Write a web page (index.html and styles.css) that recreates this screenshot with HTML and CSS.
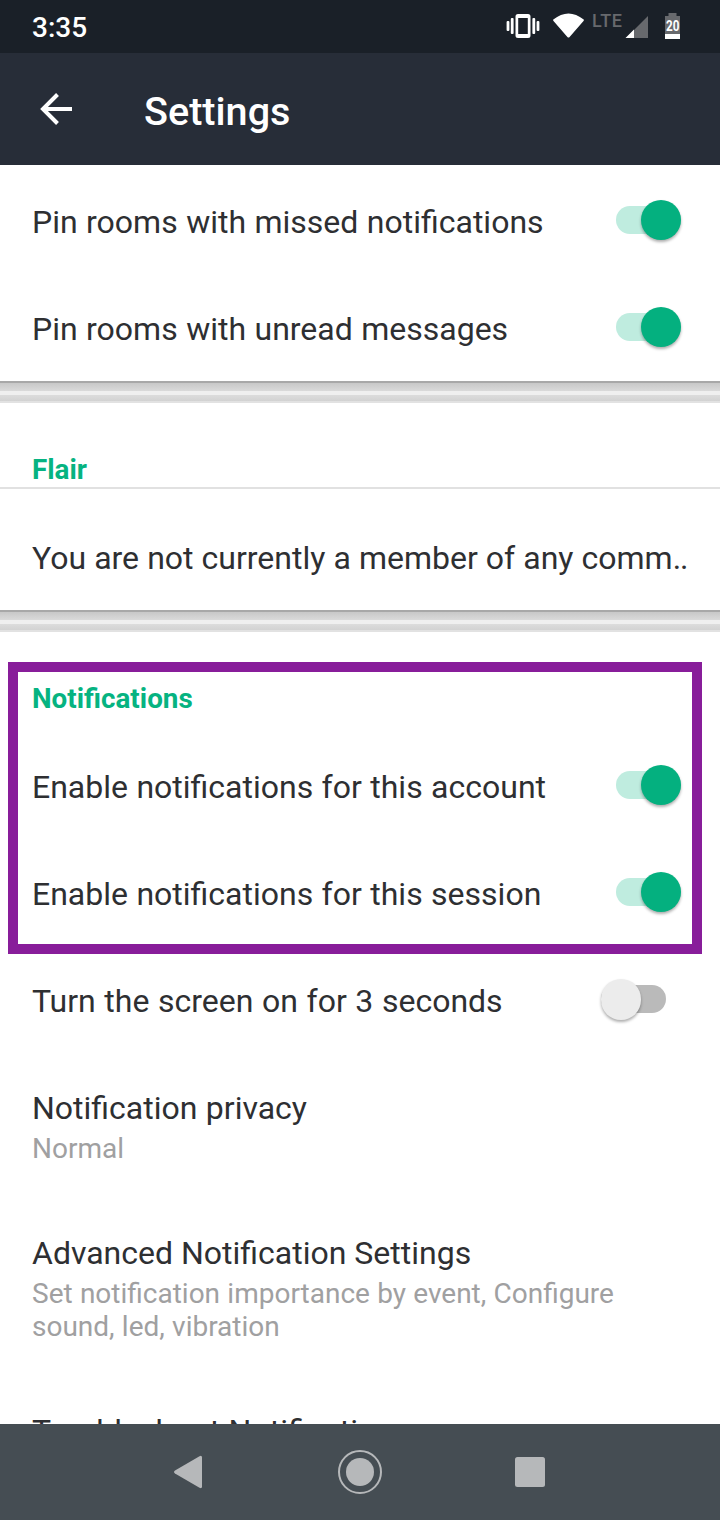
FILE: index.html
```html
<!DOCTYPE html>
<html lang="en">
<head>
<meta charset="utf-8">
<title>Settings</title>
<link rel="stylesheet" href="styles.css">
</head>
<body>
<div class="screen">
  <div class="status">
    <span class="clock">3:35</span>
    <svg class="status-icons" width="180" height="32" viewBox="500 10 180 32">
      <g fill="#fff">
        <path fill-rule="evenodd" d="M518 14h10q2.500 0 2.500 2.500v19q0 2.500-2.500 2.500h-10q-2.500 0-2.500-2.500V16.500q0-2.500 2.500-2.500zm0.200 4v16h9.600V18z"/>
        <rect x="510.800" y="18" width="2.800" height="16" rx="1"/><rect x="506.600" y="21" width="2.800" height="10" rx="1"/>
        <rect x="532.400" y="18" width="2.800" height="16" rx="1"/><rect x="536.600" y="21" width="2.800" height="10" rx="1"/>
        <path d="M553.300 19.500Q568.500 7.500 583.700 19.500Q584.200 20.200 583.500 21L569.600 37Q568.500 38 567.400 37L553.500 21Q552.800 20.200 553.300 19.500z"/>
      </g>
      <text class="lte" x="592" y="27" textLength="30">LTE</text>
      <path fill="#67696d" d="M648 16v22h-22z"/>
      <path fill="#fff" d="M634 29.500V38h-8.500z"/>
      <path fill="#67696d" d="M668.500 13h8v3h3.500v19h-15V16h3.500z"/>
      <path fill="#fff" d="M665 34h15v5h-15z"/>
      <text class="battery" x="666" y="31" textLength="13.400" lengthAdjust="spacingAndGlyphs">20</text>
    </svg>
  </div>
  <header class="toolbar">
    <svg class="back" width="34" height="34" viewBox="39 92 34 34" fill="none" stroke="#fff" stroke-width="4"><path d="M72 109H43M57.500 94.500L43 109l14.500 14.500"/></svg>
    <h1 class="title">Settings</h1>
  </header>
  <main class="list">
    <div class="row"><span class="label">Pin rooms with missed notifications</span><span class="switch on"></span></div>
    <div class="row"><span class="label">Pin rooms with unread messages</span><span class="switch on"></span></div>
    <div class="divider"></div>
    <h2 class="category lined">Flair</h2>
    <div class="row flair"><span class="label">You are not currently a member of any comm<span class="dots">..</span></span></div>
    <div class="divider"></div>
    <section class="notifications">
      <h2 class="category">Notifications</h2>
      <div class="row"><span class="label">Enable notifications for this account</span><span class="switch on"></span></div>
      <div class="row"><span class="label">Enable notifications for this session</span><span class="switch on"></span></div>
      <div class="highlight"></div>
    </section>
    <div class="row"><span class="label wide">Turn the screen on for 3 seconds</span><span class="switch"></span></div>
    <div class="row stacked"><span class="label">Notification privacy</span><span class="summary">Normal</span></div>
    <div class="row stacked tall"><span class="label even">Advanced Notification Settings</span><span class="summary">Set notification importance by event, Configure<br>sound, led, vibration</span></div>
    <div class="row"><span class="label">Troubleshoot Notifications</span></div>
  </main>
  <nav class="nav">
    <svg width="720" height="96" viewBox="0 1424 720 96" fill="#b6b8ba">
      <path d="M175 1470.500L199.500 1456.200Q202 1455 202 1457.500V1486.500Q202 1489 199.500 1487.800L175 1473.500Q173 1472 175 1470.500z"/>
      <circle cx="360" cy="1472" r="14"/><circle cx="360" cy="1472" r="21" fill="none" stroke="#b6b8ba" stroke-width="2"/>
      <rect x="515" y="1457" width="30" height="30" rx="2.500"/>
    </svg>
  </nav>
</div>
</body>
</html>
```
FILE: styles.css
```css
* { box-sizing: border-box; }
body { margin: 0; font-family: Roboto, "Liberation Sans", sans-serif; color: #2e2f32; background: #fff; }
.screen { width: 720px; height: 1520px; display: flex; flex-direction: column; overflow: hidden; }
.status { flex: none; height: 53px; padding: 10px 40px 0 32px; display: flex; justify-content: space-between; background: #1a2028; }
.clock { margin-top: 1px; font-size: 28px; line-height: 34px; font-weight: 500; color: #fff; }
.status-icons { flex: none; }
.lte { font: 500 18px Roboto, sans-serif; fill: #67696d; }
.battery { font: 700 14px Roboto, sans-serif; fill: #fff; }
.toolbar { flex: none; height: 112px; padding-left: 39px; display: flex; align-items: center; gap: 71px; background: #272d38; color: #fff; }
.title { margin: 6px 0 0; font-size: 39.6px; line-height: 48px; font-weight: 500; }
.list { flex: 1; min-height: 0; overflow: hidden; padding-top: 2px; }
.row { height: 107px; padding: 36px 39px 0 32px; display: flex; justify-content: space-between; align-items: flex-start; }
.label { font-size: 32px; line-height: 38px; white-space: nowrap; word-spacing: .5px; }
.label.wide { word-spacing: .65px; }
.label.even { word-spacing: 0; }
.summary { font-size: 28px; line-height: 33px; color: #a0a0a1; margin-top: 5px; word-spacing: .3px; }
.stacked { height: 145px; flex-direction: column; justify-content: flex-start; }
.tall { height: 178px; }
.flair { height: 121px; padding-top: 50px; }
.flair .label { word-spacing: .12px; }
.dots { letter-spacing: -1.2px; }
.divider { height: 22px; background: linear-gradient(#a8a8a8 0 2px, #c8c8c8 2px, #dadada 10px, #efefef 10px 14px, #dcdcdc 14px, #d2d2d2 20px, #e2e2e2 20px); }
.category { height: 86px; margin: 0; padding: 50px 32px 0; font-size: 27.8px; line-height: 33px; font-weight: 700; color: #06b381; }
.lined { border-bottom: 2px solid #e1e1e1; }
.notifications { position: relative; }
.notifications .category { height: 100px; }
.highlight { position: absolute; left: 8px; top: 30px; width: 694px; height: 292px; border: 10px solid #881d9a; }
.switch { position: relative; width: 65px; height: 28px; margin-top: 3px; border-radius: 14px; background: #bababa; margin-right: 15px; }
.switch::after { content: ""; position: absolute; left: -.5px; top: -6px; width: 40.5px; height: 40.5px; border-radius: 50%; background: #ececec; box-shadow: 0 2px 3px rgba(0,0,0,.32); }
.switch.on { background: #bfecdf; margin-right: 0; }
.switch.on::after { left: 25px; width: 40px; height: 40px; background: #04b07f; }
.nav { flex: none; height: 96px; background: #454d53; }
.nav svg { display: block; }
```
